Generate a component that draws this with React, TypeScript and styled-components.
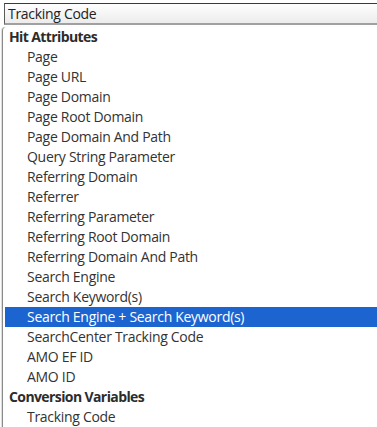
import styled, { createGlobalStyle } from "styled-components";

const GlobalStyle = createGlobalStyle`
  body {
    margin: 0;
    background: #ffffff;
    font-family: "Open Sans", "Noto Sans", sans-serif;
  }
`;

type Option = { label: string; group?: boolean; selected?: boolean };

const options: Option[] = [
  { label: "Hit Attributes", group: true },
  { label: "Page" },
  { label: "Page URL" },
  { label: "Page Domain" },
  { label: "Page Root Domain" },
  { label: "Page Domain And Path" },
  { label: "Query String Parameter" },
  { label: "Referring Domain" },
  { label: "Referrer" },
  { label: "Referring Parameter" },
  { label: "Referring Root Domain" },
  { label: "Referring Domain And Path" },
  { label: "Search Engine" },
  { label: "Search Keyword(s)" },
  { label: "Search Engine + Search Keyword(s)", selected: true },
  { label: "SearchCenter Tracking Code" },
  { label: "AMO EF ID" },
  { label: "AMO ID" },
  { label: "Conversion Variables", group: true },
  { label: "Tracking Code" },
];

const App = () => {
  return (
    <>
      <GlobalStyle />
      <Page>
        <SelectBox>Tracking Code</SelectBox>
        <Dropdown>
          {options.map((o) => (
            <Row key={o.label} $group={o.group} $selected={o.selected}>
              {o.label}
            </Row>
          ))}
        </Dropdown>
      </Page>
    </>
  );
};

export default App;

const Page = styled.div`
  width: 377px;
  height: 427px;
  overflow: hidden;
  padding-top: 3px;
  box-sizing: border-box;
`;

const SelectBox = styled.div`
  margin-left: 4px;
  height: 22px;
  box-sizing: border-box;
  border-top: 1px solid #3a3a3a;
  border-left: 1px solid #5a5a5a;
  border-bottom: 2px solid #a0a0a0;
  background: linear-gradient(#fefefe, #ececec);
  padding-left: 3px;
  font-size: 14px;
  line-height: 19px;
  color: #222;
  letter-spacing: -0.3px;
`;

const Dropdown = styled.div`
  margin-top: 2px;
  margin-left: 2px;
  border-left: 1px solid #8a8a8a;
  border-top-left-radius: 4px;
  box-shadow: -1px 0 1px rgba(0, 0, 0, 0.15);
  background: #ffffff;
`;

const Row = styled.div<{ $group?: boolean; $selected?: boolean }>`
  height: 20px;
  line-height: 20px;
  font-size: 14px;
  letter-spacing: ${({ $group }) => ($group ? "-0.6px" : "-0.3px")};
  white-space: nowrap;
  padding-left: ${({ $group }) => ($group ? "4px" : "22px")};
  margin-left: 2px;
  font-weight: ${({ $group }) => ($group ? 700 : 400)};
  color: ${({ $selected, $group }) => ($selected ? "#ffffff" : $group ? "#2c2c2c" : "#333333")};
  background: ${({ $selected }) => ($selected ? "#1c64d0" : "transparent")};
`;
